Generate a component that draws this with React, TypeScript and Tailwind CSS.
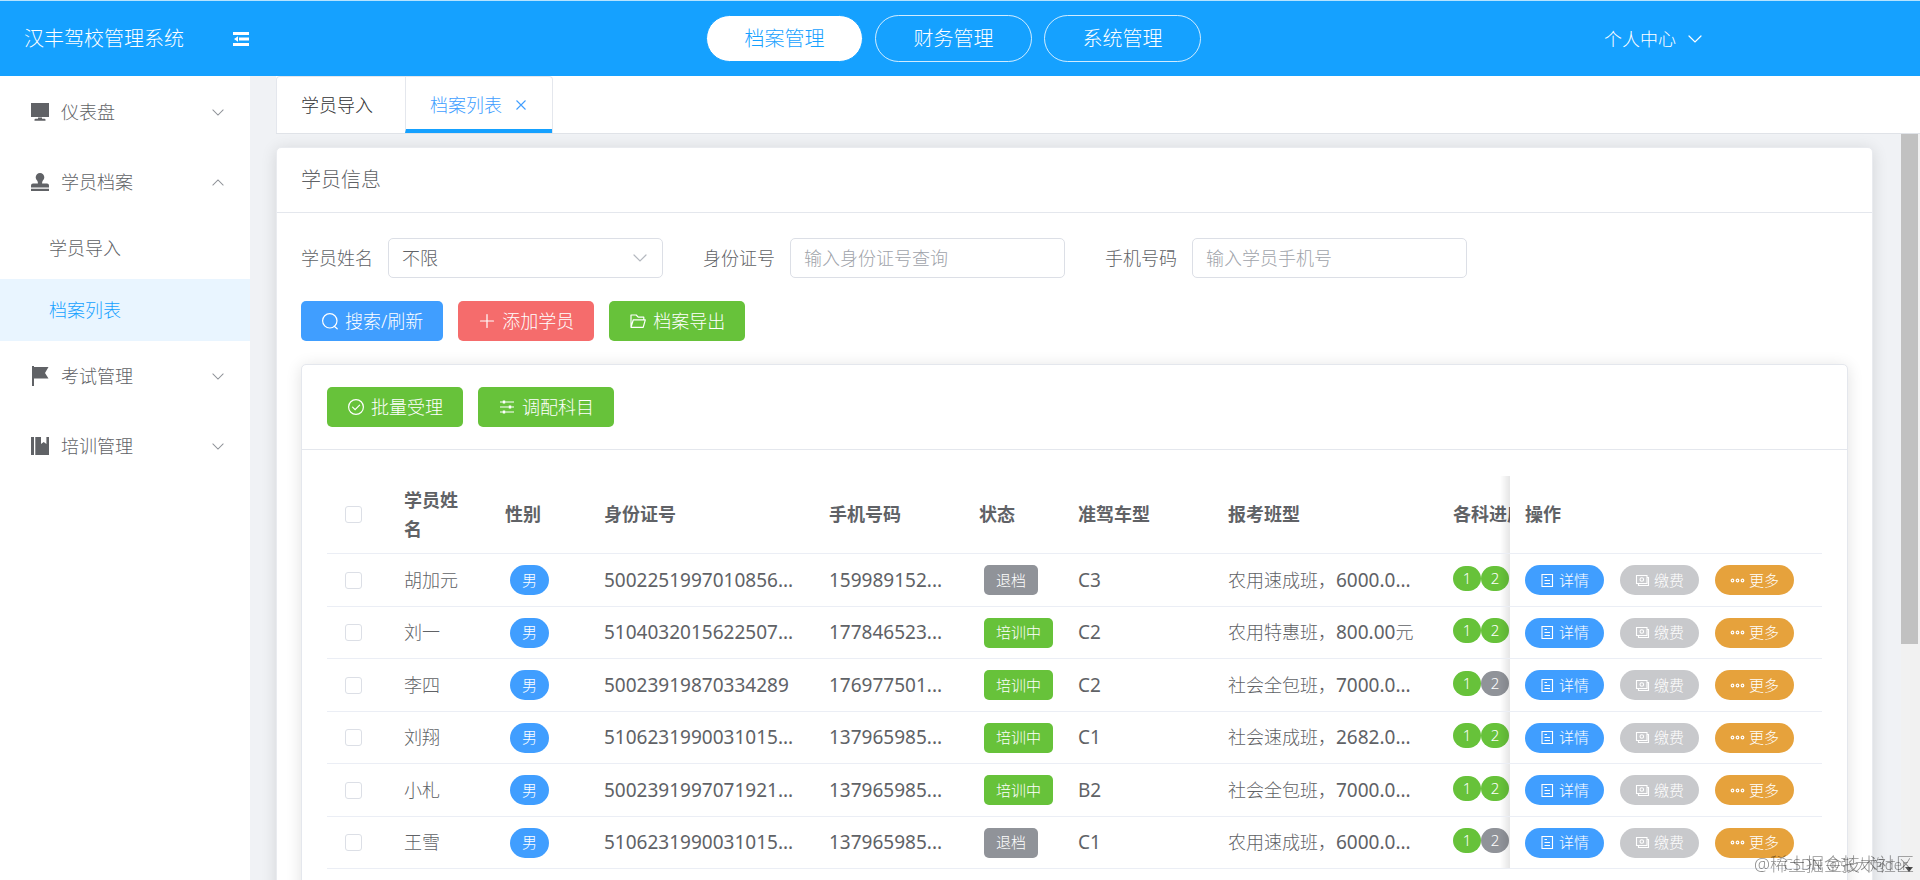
import React from 'react';
import clsx from 'clsx';

interface IconProps {
  className?: string;
}

interface Student {
  name: string;
  idCard: string;
  phone: string;
  status: '退档' | '培训中';
  car: string;
  plan: string;
  price: string;
  unit?: string;
  secondPassed: boolean;
}

const students: Student[] = [
  { name: '胡加元', idCard: '5002251997010856...', phone: '159989152...', status: '退档', car: 'C3', plan: '农用速成班，', price: '6000.0...', secondPassed: true },
  { name: '刘一', idCard: '5104032015622507...', phone: '177846523...', status: '培训中', car: 'C2', plan: '农用特惠班，', price: '800.00', unit: '元', secondPassed: true },
  { name: '李四', idCard: '50023919870334289', phone: '176977501...', status: '培训中', car: 'C2', plan: '社会全包班，', price: '7000.0...', secondPassed: false },
  { name: '刘翔', idCard: '5106231990031015...', phone: '137965985...', status: '培训中', car: 'C1', plan: '社会速成班，', price: '2682.0...', secondPassed: true },
  { name: '小札', idCard: '5002391997071921...', phone: '137965985...', status: '培训中', car: 'B2', plan: '社会全包班，', price: '7000.0...', secondPassed: true },
  { name: '王雪', idCard: '5106231990031015...', phone: '137965985...', status: '退档', car: 'C1', plan: '农用速成班，', price: '6000.0...', secondPassed: false },
];

/* ---------- Icons ---------- */

const ChevronIcon: React.FC<IconProps> = ({ className }) => (
  <svg viewBox="0 0 14 8" className={className} fill="none" stroke="currentColor" strokeWidth="1.2" strokeLinecap="round">
    <path d="M1 1l6 6 6-6" />
  </svg>
);

const FoldIcon: React.FC<IconProps> = ({ className }) => (
  <svg viewBox="0 0 16 14" className={className} fill="currentColor">
    <path d="M0 0h16v3H0zM6 5.5h10v3H6zM0 11h16v3H0zM5 4.2v5.6L1 7z" />
  </svg>
);

const PlatformIcon: React.FC<IconProps> = ({ className }) => (
  <svg viewBox="0 0 18 18" className={className} fill="currentColor">
    <path d="M0 0h18v14H0zM7 14.5h4v1.3h2.5a1 1 0 0 1 1 1v.9h-11v-.9a1 1 0 0 1 1-1H7z" />
  </svg>
);

const StampIcon: React.FC<IconProps> = ({ className }) => (
  <svg viewBox="0 0 18 18" className={className} fill="currentColor">
    <path d="M9 0a4.3 4.3 0 0 1 4.3 4.3c0 1.5-.8 2.6-1.6 3.5-.5.6-.6 1.6-.6 2.7H16a2 2 0 0 1 2 2v2H0v-2a2 2 0 0 1 2-2h4.9c0-1.1-.1-2.1-.6-2.7-.8-.9-1.6-2-1.6-3.500A4.300 4.300 0 0 1 9 0zM0 15.800h18V18H0z" />
  </svg>
);

const FlagIcon: React.FC<IconProps> = ({ className }) => (
  <svg viewBox="0 0 18 20" className={className} fill="currentColor">
    <path d="M1 0h2v1h14.500l-3.500 6 3.500 5.500H3V20H1z" />
  </svg>
);

const BookIcon: React.FC<IconProps> = ({ className }) => (
  <svg viewBox="0 0 18 18" className={className} fill="currentColor">
    <path d="M0 0h3v18H0zM4.300 0H10v7l2.700-2L15.400 7V0H18v18H4.300z" />
  </svg>
);

const SearchIcon: React.FC<IconProps> = ({ className }) => (
  <svg viewBox="0 0 18 18" className={className} fill="none" stroke="currentColor" strokeWidth="1.2" strokeLinecap="round">
    <circle cx="8.8" cy="8.8" r="7.2" />
    <path d="M13.200 14.200l3 2.600" />
  </svg>
);

const PlusIcon: React.FC<IconProps> = ({ className }) => (
  <svg viewBox="0 0 18 18" className={className} fill="none" stroke="currentColor" strokeWidth="1.2" strokeLinecap="round">
    <path d="M9 2.500v13M2.500 9h13" />
  </svg>
);

const FolderIcon: React.FC<IconProps> = ({ className }) => (
  <svg viewBox="0 0 18 18" className={className} fill="none" stroke="currentColor" strokeWidth="1.2" strokeLinejoin="round">
    <path d="M2 15.300V3h5.200l2 2.200h5.600v2.600M2 15.300L4.300 7.800h12L14.200 15.300z" />
  </svg>
);

const CircleCheckIcon: React.FC<IconProps> = ({ className }) => (
  <svg viewBox="0 0 18 18" className={className} fill="none" stroke="currentColor" strokeWidth="1.2" strokeLinecap="round">
    <circle cx="9" cy="9" r="7.4" />
    <path d="M5.600 9.200l2.500 2.500 4.500-4.600" />
  </svg>
);

const OperationIcon: React.FC<IconProps> = ({ className }) => (
  <svg viewBox="0 0 18 18" className={className} fill="none" stroke="currentColor" strokeWidth="1.2">
    <path d="M2 4h14M2 9h14M2 14h14" />
    <path d="M6 2.600v2.800M12 7.600v2.800M6 12.600v2.800" strokeWidth="2.4" />
  </svg>
);

const TicketIcon: React.FC<IconProps> = ({ className }) => (
  <svg viewBox="0 0 15 15" className={className} fill="none" stroke="currentColor" strokeWidth="1.1">
    <path d="M2 1.500h10.500v12H2zM4.500 4.500h2.500M4.500 7.500h5.500M4.500 10.500h5.500" />
  </svg>
);

const BankCardIcon: React.FC<IconProps> = ({ className }) => (
  <svg viewBox="0 0 15 15" className={className} fill="none" stroke="currentColor" strokeWidth="1.1">
    <path d="M1.500 2.500h10.500v8H1.500zM12 4.500h1.500v8H3.500v-2" />
    <circle cx="6.8" cy="6.5" r="1.8" />
  </svg>
);

const MoreIcon: React.FC<IconProps> = ({ className }) => (
  <svg viewBox="0 0 15 15" className={className} fill="none" stroke="currentColor" strokeWidth="1.2">
    <circle cx="2.5" cy="7.5" r="1.3" />
    <circle cx="7.5" cy="7.5" r="1.3" />
    <circle cx="12.5" cy="7.5" r="1.3" />
  </svg>
);

/* ---------- Shared controls ---------- */

interface ButtonProps {
  icon: React.ReactNode;
  color: string;
  children: React.ReactNode;
}

const ActionButton: React.FC<ButtonProps> = ({ icon, color, children }) => (
  <button type="button" className={clsx('flex h-10 items-center gap-1.5 rounded-[5px] px-5 text-lg leading-none text-white', color)}>
    {icon}
    <span>{children}</span>
  </button>
);

const RowButton: React.FC<ButtonProps> = ({ icon, color, children }) => (
  <button type="button" className={clsx('flex h-[30px] items-center gap-1 rounded-full px-[15px] text-[15px] leading-none text-white', color)}>
    {icon}
    <span>{children}</span>
  </button>
);

const Checkbox: React.FC<{ label: string }> = ({ label }) => (
  <input
    type="checkbox"
    aria-label={label}
    className="block h-[17px] w-[17px] appearance-none rounded-[3px] border border-[#dcdfe6] bg-white checked:bg-[#409eff]"
  />
);

/* ---------- Page sections ---------- */

const Header = () => {
  const navs = ['档案管理', '财务管理', '系统管理'];

  return (
    <header className="grid h-[76px] shrink-0 grid-cols-[706px_1fr_auto] items-center border-t border-[#b5e3ff] bg-[#15a1ff] pr-[218px] text-white">
      <div className="flex items-center gap-[49px] pl-6">
        <h1 className="text-xl font-light">汉丰驾校管理系统</h1>
        <button type="button" aria-label="收起菜单">
          <FoldIcon className="h-3.5 w-4" />
        </button>
      </div>
      <nav className="flex gap-3">
        {navs.map((nav, i) => (
          <button
            key={nav}
            type="button"
            className={clsx(
              'h-[47px] w-[157px] rounded-full border text-xl leading-none',
              i === 0 ? 'border-[#15a1ff] bg-white text-[#15a1ff]' : 'border-white/80'
            )}
          >
            {nav}
          </button>
        ))}
      </nav>
      <button type="button" className="flex items-center gap-3 text-lg">
        个人中心
        <ChevronIcon className="h-2 w-3.5" />
      </button>
    </header>
  );
};

interface MenuItemProps {
  icon: React.ReactNode;
  title: string;
  open?: boolean;
}

const MenuItem: React.FC<MenuItemProps> = ({ icon, title, open }) => (
  <button type="button" className="flex h-[70px] w-full items-center pr-[26px] pl-[31px] text-lg text-[#606266]">
    {icon}
    <span className="ml-3 flex-1 text-left">{title}</span>
    <ChevronIcon className={clsx('h-[7px] w-3 text-[#909399]', open && 'rotate-180')} />
  </button>
);

const Sidebar = () => (
  <aside className="w-[250px] shrink-0 bg-white pt-px">
    <MenuItem icon={<PlatformIcon className="h-[18px] w-[18px]" />} title="仪表盘" />
    <MenuItem icon={<StampIcon className="h-[18px] w-[18px]" />} title="学员档案" open />
    <a href="#import" className="flex h-[62px] items-center pl-[49px] text-lg text-[#606266]">
      学员导入
    </a>
    <a href="#list" className="flex h-[62px] items-center bg-[#e9f5ff] pl-[49px] text-lg text-[#15a1ff]">
      档案列表
    </a>
    <MenuItem icon={<FlagIcon className="h-5 w-[18px]" />} title="考试管理" />
    <MenuItem icon={<BookIcon className="h-[18px] w-[18px]" />} title="培训管理" />
  </aside>
);

const Tabs = () => (
  <div className="flex h-[58px] shrink-0 border-b border-[#e0e3e8] bg-white">
    <div className="flex rounded-t border border-b-0 border-[#e4e7ed]">
      <button type="button" className="pr-8 pl-6 text-lg text-[#303133]">
        学员导入
      </button>
      <button type="button" className="flex items-center gap-3.5 border-b-4 border-l border-b-[#15a1ff] border-l-[#e4e7ed] pt-1 pr-[26px] pl-6 text-lg text-[#409eff]">
        档案列表
        <svg viewBox="0 0 10 10" className="h-2.5 w-2.5" fill="none" stroke="currentColor" strokeWidth="1.1">
          <path d="M.5.5l9 9M9.500.5l-9 9" />
        </svg>
      </button>
    </div>
  </div>
);

const FilterForm = () => (
  <form className="flex flex-col gap-[23px]">
    <div className="flex gap-10 text-lg text-[#606266]">
      <div className="flex items-center gap-[15px]">
        <label htmlFor="student">学员姓名</label>
        <div className="relative">
          <select id="student" className="h-10 w-[275px] appearance-none rounded-[5px] border border-[#dcdfe6] bg-white px-[13px]">
            <option>不限</option>
          </select>
          <ChevronIcon className="pointer-events-none absolute top-4 right-4 h-2 w-3.5 text-[#b4b8bf]" />
        </div>
      </div>
      <div className="flex items-center gap-[15px]">
        <label htmlFor="idCard">身份证号</label>
        <input id="idCard" placeholder="输入身份证号查询" className="h-10 w-[275px] rounded-[5px] border border-[#dcdfe6] px-[13px] placeholder:text-[#a0a3aa]" />
      </div>
      <div className="flex items-center gap-[15px]">
        <label htmlFor="phone">手机号码</label>
        <input id="phone" placeholder="输入学员手机号" className="h-10 w-[275px] rounded-[5px] border border-[#dcdfe6] px-[13px] placeholder:text-[#a0a3aa]" />
      </div>
    </div>
    <div className="flex gap-[15px]">
      <ActionButton color="bg-[#409eff]" icon={<SearchIcon className="h-[18px] w-[18px]" />}>搜索/刷新</ActionButton>
      <ActionButton color="bg-[#f56c6c]" icon={<PlusIcon className="h-[18px] w-[18px]" />}>添加学员</ActionButton>
      <ActionButton color="bg-[#67c23a]" icon={<FolderIcon className="h-[18px] w-[18px]" />}>档案导出</ActionButton>
    </div>
  </form>
);

// Fixed action column with a soft edge over the scrolled cells
const fixedCell =
  "sticky right-0 bg-white before:absolute before:inset-y-0 before:-left-2.5 before:w-2.5 before:bg-linear-to-l before:from-black/10 before:to-transparent before:content-['']";

const StudentTable = () => (
  <div className="overflow-x-auto">
    <table className="w-[1652px] table-fixed border-separate border-spacing-0 text-left text-lg text-[#606266]">
      <colgroup>
        <col className="w-[64px]" />
        <col className="w-[101px]" />
        <col className="w-[99px]" />
        <col className="w-[225px]" />
        <col className="w-[150px]" />
        <col className="w-[99px]" />
        <col className="w-[150px]" />
        <col className="w-[225px]" />
        <col className="w-[227px]" />
        <col className="w-[312px]" />
      </colgroup>
      <thead>
        <tr className="h-[78px] [&>th]:border-b [&>th]:border-[#ebeef5] [&>th]:px-[13px] [&>th]:leading-[29px]">
          <th>
            <div className="pl-[5px]">
              <Checkbox label="全选" />
            </div>
          </th>
          <th>
            <div className="pr-4">学员姓名</div>
          </th>
          <th>性别</th>
          <th>身份证号</th>
          <th>手机号码</th>
          <th>状态</th>
          <th>准驾车型</th>
          <th>报考班型</th>
          <th>各科进度</th>
          <th className={fixedCell}>
            <div className="pl-0.5">操作</div>
          </th>
        </tr>
      </thead>
      <tbody>
        {students.map((s) => (
          <tr key={s.name} className="odd:h-[53px] even:h-[52px] [&>td]:border-b [&>td]:border-[#ebeef5] [&>td]:px-[13px] [&>td]:leading-[29px] [&>td]:whitespace-nowrap">
            <td>
              <div className="pl-[5px]">
                <Checkbox label={s.name} />
              </div>
            </td>
            <td>{s.name}</td>
            <td>
              <span className="ml-[5px] flex h-[30px] w-[39px] items-center justify-center rounded-full bg-[#409eff] text-[15px] text-white">男</span>
            </td>
            <td className="text-[19px] font-normal">{s.idCard}</td>
            <td className="text-[19px] font-normal">{s.phone}</td>
            <td>
              <span
                className={clsx(
                  'ml-[5px] flex h-[30px] w-fit items-center rounded-[5px] px-3 text-[15px] text-white',
                  s.status === '退档' ? 'bg-[#909399]' : 'bg-[#67c23a]'
                )}
              >
                {s.status}
              </span>
            </td>
            <td className="text-[19px] font-normal">{s.car}</td>
            <td>
              {s.plan}
              <span className="text-[19px] font-normal">{s.price}</span>
              {s.unit}
            </td>
            <td>
              <div className="flex pb-1 text-[15px] text-white">
                <span className="flex h-[25px] w-7 items-center justify-center rounded-full bg-[#67c23a]">1</span>
                <span className={clsx('flex h-[25px] w-7 items-center justify-center rounded-full', s.secondPassed ? 'bg-[#67c23a]' : 'bg-[#909399]')}>2</span>
              </div>
            </td>
            <td className={fixedCell}>
              <div className="flex gap-4 pl-0.5">
                <RowButton color="bg-[#409eff]" icon={<TicketIcon className="h-[15px] w-[15px]" />}>详情</RowButton>
                <RowButton color="bg-[#c8c9cc]" icon={<BankCardIcon className="h-[15px] w-[15px]" />}>缴费</RowButton>
                <RowButton color="bg-[#e6a23c]" icon={<MoreIcon className="h-[15px] w-[15px]" />}>更多</RowButton>
              </div>
            </td>
          </tr>
        ))}
      </tbody>
    </table>
  </div>
);

const App = () => (
  <div className="relative flex h-screen flex-col overflow-hidden bg-[#f0f2f5] font-['Noto_Sans','Noto_Sans_CJK_SC',sans-serif] font-light">
    <Header />
    <div className="flex min-h-0 flex-1">
      <Sidebar />
      <div className="ml-[26px] flex min-w-0 flex-1 flex-col">
        <Tabs />
        <div className="flex min-h-0 flex-1">
          <main className="-ml-[26px] min-w-0 flex-1 overflow-hidden pt-[13px] pr-7 pl-[26px]">
            <section className="rounded-[5px] border border-[#e9ebef] bg-white shadow-[0_2px_16px_rgba(0,0,0,0.12)]">
              <h2 className="border-b border-[#e4e7ed] px-6 py-[18px] text-xl font-light text-[#606266]">学员信息</h2>
              <div className="flex flex-col gap-[23px] px-6 py-[25px]">
                <FilterForm />
                <div className="rounded-[5px] border border-[#e4e7ed] bg-white shadow-[0_2px_16px_rgba(0,0,0,0.12)]">
                  <div className="flex gap-[15px] border-b border-[#e4e7ed] px-[25px] py-[22px]">
                    <ActionButton color="bg-[#67c23a]" icon={<CircleCheckIcon className="h-[18px] w-[18px]" />}>批量受理</ActionButton>
                    <ActionButton color="bg-[#67c23a]" icon={<OperationIcon className="h-[18px] w-[18px]" />}>调配科目</ActionButton>
                  </div>
                  <div className="px-[25px] py-[26px]">
                    <StudentTable />
                  </div>
                </div>
              </div>
            </section>
          </main>
          {/* Scroll track */}
          <div className="flex w-[19px] shrink-0 flex-col items-start justify-between bg-[#f1f1f1]">
            <div className="h-[510px] w-[17px] bg-[#c1c1c1]" />
            <svg viewBox="0 0 8 5" className="mb-2 ml-1 h-[5px] w-2" fill="#505050">
              <path d="M0 0h8L4 5z" />
            </svg>
          </div>
        </div>
      </div>
    </div>
    {/* Watermarks */}
    <div className="pointer-events-none absolute right-2 bottom-1 h-6 w-[158px] leading-6 whitespace-nowrap text-black/45">
      <span className="absolute top-0 left-0 text-lg leading-6">@稀土掘金技术社区</span>
      <span className="absolute top-0 right-1 text-[15px] leading-6">CSDN @张大炮der</span>
    </div>
  </div>
);

export default App;
